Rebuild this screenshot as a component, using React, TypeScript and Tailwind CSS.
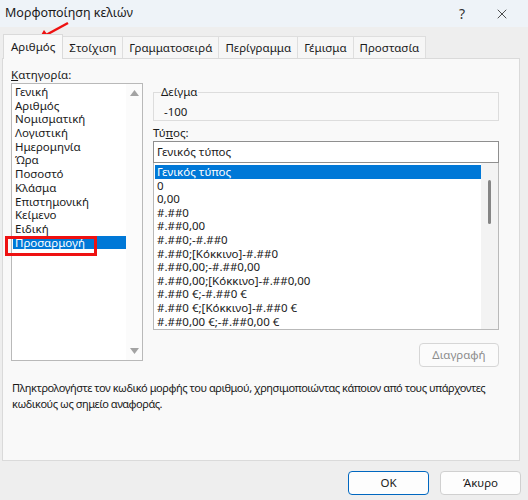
import { X } from "lucide-react";

const categories = [
  "Γενική",
  "Αριθμός",
  "Νομισματική",
  "Λογιστική",
  "Ημερομηνία",
  "Ώρα",
  "Ποσοστό",
  "Κλάσμα",
  "Επιστημονική",
  "Κείμενο",
  "Ειδική",
  "Προσαρμογή",
];

const formats = [
  "Γενικός τύπος",
  "0",
  "0,00",
  "#.##0",
  "#.##0,00",
  "#.##0;-#.##0",
  "#.##0;[Κόκκινο]-#.##0",
  "#.##0,00;-#.##0,00",
  "#.##0,00;[Κόκκινο]-#.##0,00",
  "#.##0 €;-#.##0 €",
  "#.##0 €;[Κόκκινο]-#.##0 €",
  "#.##0,00 €;-#.##0,00 €",
];

const tabs = ["Αριθμός", "Στοίχιση", "Γραμματοσειρά", "Περίγραμμα", "Γέμισμα", "Προστασία"];

export default function App() {
  return (
    <div
      className="relative w-[528px] h-[500px] bg-[#eeeeee] text-[11.5px] text-[#1a1a1a] flex flex-col overflow-hidden"
      style={{ fontFamily: '"Noto Sans", "Open Sans", sans-serif' }}
    >
      {/* Title bar */}
      <div className="h-[27px] bg-[#eef3f8] flex items-center pl-[5px] pr-[18px] shrink-0">
        <span className="text-[12.5px] flex-1">Μορφοποίηση κελιών</span>
        <span className="text-[14px] text-[#333] w-[44px] text-center">?</span>
        <X className="w-[16px] h-[16px] ml-[10px] text-[#222]" strokeWidth={1.2} />
      </div>

      {/* Tabs */}
      <div className="flex items-end pl-[3px] mt-[6px] h-[25px] shrink-0">
        {tabs.map((t, i) =>
          i === 0 ? (
            <div
              key={t}
              className="h-[25px] px-[7px] flex items-center bg-[#f9f9f9] border border-b-0 border-[#dadada] relative z-10 -mb-px"
            >
              {t}
            </div>
          ) : (
            <div
              key={t}
              className="h-[22px] px-[6px] flex items-center bg-[#f6f6f6] border border-l-0 border-b-0 border-[#dedede]"
            >
              {t}
            </div>
          )
        )}
      </div>

      {/* Panel */}
      <div className="ml-[2px] w-[518px] h-[403px] bg-[#f9f9f9] border border-[#dadada] shrink-0 flex flex-col px-[8px] pt-[7px]">
        <div className="flex gap-[10px]">
          {/* Category column */}
          <div className="w-[132px] flex flex-col">
            <div className="h-[17px] leading-[17px]">
              <span className="underline">Κ</span>ατηγορία:
            </div>
            <div className="h-[278px] bg-white border border-[#b9b9b9] flex">
              <div className="flex-1 pt-[1px] pl-[1px]">
                {categories.map((c) => (
                  <div
                    key={c}
                    className={
                      "h-[13.7px] leading-[13.7px] pl-[2px] " +
                      (c === "Προσαρμογή" ? "bg-[#0078d7] text-white" : "")
                    }
                  >
                    {c}
                  </div>
                ))}
              </div>
              <div className="w-[16px] flex flex-col justify-between items-center py-[6px] bg-[#fbfbfb]">
                <svg width="9" height="6" viewBox="0 0 9 6">
                  <path d="M0 6 L4.5 0 L9 6 Z" fill="#a3a3a3" />
                </svg>
                <svg width="9" height="6" viewBox="0 0 9 6">
                  <path d="M0 0 L4.5 6 L9 0 Z" fill="#a3a3a3" />
                </svg>
              </div>
            </div>
          </div>

          {/* Right column */}
          <div className="w-[346px] flex flex-col">
            <fieldset className="mt-[20px] h-[35px] border border-[#dddddd] pl-[10px]">
              <legend className="px-0 text-[11.5px] leading-[12px] -ml-[3px]">Δείγμα</legend>
              <div className="mt-[5px]">-100</div>
            </fieldset>
            <div className="mt-[4px] h-[16px] leading-[16px]">
              Τύ<span className="underline">π</span>ος:
            </div>
            <div className="h-[22px] bg-white border border-[#8f8f8f] flex items-center px-[3px]">
              Γενικός τύπος
            </div>
            <div className="h-[167px] bg-white border border-t-0 border-[#b9b9b9] flex">
              <div className="flex-1 pt-[2px] pl-[1px]">
                {formats.map((f, i) => (
                  <div
                    key={f}
                    className={
                      "h-[13.6px] leading-[13.6px] pl-[2px] whitespace-nowrap " +
                      (i === 0 ? "bg-[#0078d7] text-white" : "")
                    }
                  >
                    {f}
                  </div>
                ))}
              </div>
              <div className="w-[17px] bg-[#f3f3f3] flex justify-center pt-[17px]">
                <div className="w-[3px] h-[44px] rounded-full bg-[#858585]" />
              </div>
            </div>
            <div className="flex justify-end mt-[13px]">
              <div className="w-[80px] h-[24px] border border-[#d6d6d6] rounded-[4px] bg-[#fbfbfb] flex items-center justify-center text-[#8c8c8c]">
                Διαγραφή
              </div>
            </div>
          </div>
        </div>

        <p className="mt-[13px] pl-[1px] leading-[16px] whitespace-nowrap text-[11px] tracking-[-0.45px]">
          Πληκτρολογήστε τον κωδικό μορφής του αριθμού, χρησιμοποιώντας κάποιον από τους υπάρχοντες
          <br />
          κωδικούς ως σημείο αναφοράς.
        </p>
      </div>

      {/* Buttons */}
      <div className="flex justify-end gap-[11px] pr-[7px] mt-[10px]">
        <div className="w-[81px] h-[24px] border border-[#0067c0] rounded-[4px] bg-[#fdfdfd] flex items-center justify-center">
          OK
        </div>
        <div className="w-[81px] h-[24px] border border-[#d0d0d0] rounded-[4px] bg-[#fdfdfd] flex items-center justify-center">
          Άκυρο
        </div>
      </div>

      {/* Annotation: red arrow */}
      <svg className="absolute left-0 top-0 pointer-events-none" width="100" height="50">
        <line x1="68" y1="23" x2="46" y2="35" stroke="#ee1111" strokeWidth="2.5" />
        <path d="M38 40 L44 30 L50 38 Z" fill="#ee1111" />
      </svg>

      {/* Annotation: red box */}
      <div className="absolute left-[5px] top-[236px] w-[92px] h-[20px] border-[3px] border-[#ee1111] pointer-events-none" />
    </div>
  );
}
